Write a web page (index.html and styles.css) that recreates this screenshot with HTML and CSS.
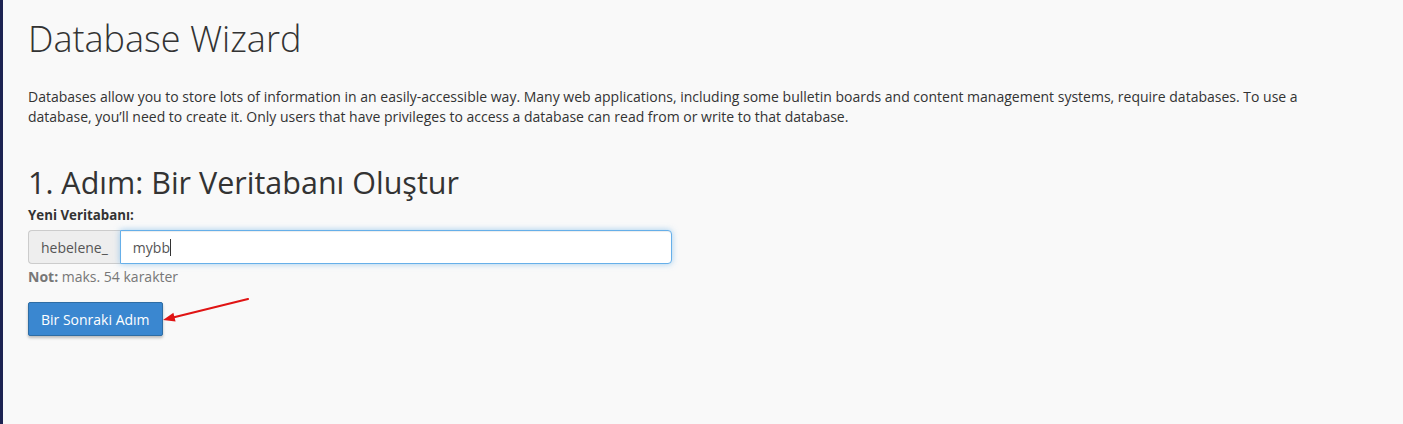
FILE: index.html
```html
<!DOCTYPE html>
<html lang="tr">
<head>
<meta charset="utf-8">
<title>Database Wizard</title>
<link rel="stylesheet" href="styles.css">
</head>
<body>
<div class="page">
  <div class="content">
    <h1 class="title">Database Wizard</h1>
    <p class="intro">Databases allow you to store lots of information in an easily-accessible way. Many web applications, including some bulletin boards and content management systems, require databases. To use a database, you’ll need to create it. Only users that have privileges to access a database can read from or write to that database.</p>

    <h2 class="step">1. Adım: Bir Veritabanı Oluştur</h2>
    <form class="form">
      <label class="label" for="db">Yeni Veritabanı:</label>
      <div class="input-group">
        <span class="addon">hebelene_</span>
        <div class="field"><span class="value">mybb</span><span class="caret"></span></div>
      </div>
      <p class="note"><strong>Not:</strong> maks. 54 karakter</p>
      <div class="actions">
        <button type="button" class="btn">Bir Sonraki Adım</button>
        <svg class="arrow" width="100" height="34" viewBox="0 0 100 34">
          <line x1="86" y1="3" x2="11" y2="21.5" stroke="#e01414" stroke-width="2.2" stroke-linecap="round"/>
          <polygon points="1,24 13.6,25.6 11.4,16.8" fill="#e01414"/>
        </svg>
      </div>
    </form>
  </div>
</div>
</body>
</html>
```

FILE: styles.css
```css
html, body {
  margin: 0;
  padding: 0;
  height: 100%;
}
body {
  background: #f9f9f9;
  font-family: "Open Sans", "Liberation Sans", sans-serif;
  color: #333;
}
.page {
  min-height: 100%;
  border-left: 3px solid #1d2352;
  box-sizing: border-box;
}
.content {
  padding: 14px 0 0 25px;
  width: 1290px;
}
.title {
  margin: 0;
  font-size: 36px;
  font-weight: 300;
  line-height: 50px;
  color: #333;
}
.intro {
  margin: 23px 0 0;
  font-size: 14px;
  line-height: 20px;
}
.step {
  margin: 35px 0 0;
  font-size: 30.5px;
  font-weight: 400;
  line-height: 40px;
}
.form {
  margin-top: 3px;
}
.label {
  display: block;
  font-size: 13.3px;
  font-weight: 700;
  line-height: 20px;
}
.input-group {
  display: flex;
  margin-top: 5px;
  width: 644px;
  height: 34px;
}
.addon {
  display: flex;
  align-items: center;
  padding: 0 12px;
  background: #eee;
  border: 1px solid #ccc;
  border-right: 0;
  border-radius: 4px 0 0 4px;
  font-size: 14px;
  color: #555;
}
.field {
  flex: 1;
  display: flex;
  align-items: center;
  padding: 0 12px;
  background: #fff;
  border: 1px solid #66afe9;
  border-radius: 0 4px 4px 0;
  box-shadow: inset 0 1px 1px rgba(0,0,0,.075), 0 0 6px rgba(102,175,233,.6);
  font-size: 14px;
  color: #555;
}
.caret {
  display: inline-block;
  width: 1px;
  height: 17px;
  background: #333;
}
.note {
  margin: 3px 0 0;
  font-size: 14px;
  line-height: 20px;
  color: #777;
}
.actions {
  display: flex;
  align-items: flex-start;
  margin-top: 15px;
}
.btn {
  height: 34px;
  padding: 0 12px;
  background: #3a87d0;
  border: 1px solid #2e6da4;
  border-radius: 2px;
  color: #fff;
  font-family: "Open Sans", "Liberation Sans", sans-serif;
  font-size: 14px;
  box-shadow: 0 2px 3px rgba(0,0,0,.25);
  cursor: pointer;
}
.arrow {
  display: block;
  margin: -6px 0 0 -1px;
}
```
